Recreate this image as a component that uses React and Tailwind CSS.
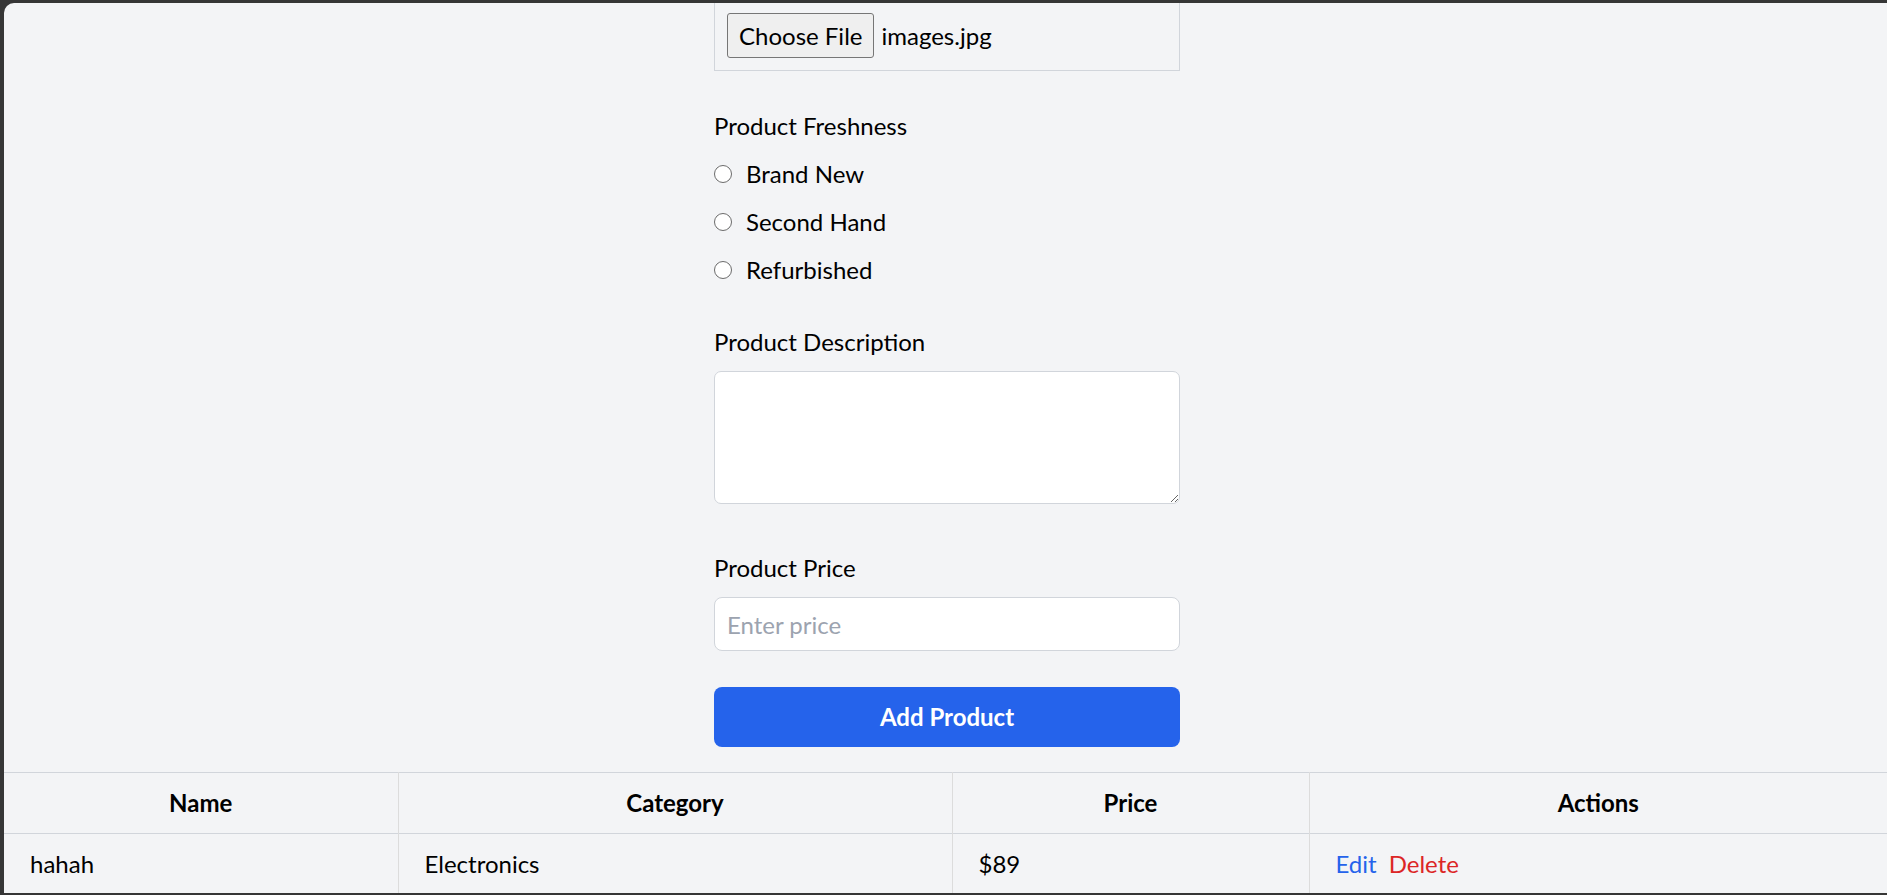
import React from 'react'

export default function App() {
    const products = [
        { name: 'hahah', category: 'Electronics', price: '$89' },
    ]

    const freshness = ['Brand New', 'Second Hand', 'Refurbished']

    return (
        <div className="h-[895px] overflow-hidden bg-[#363636] pt-[3px] pl-[4px] pb-[2px]">
            <div className="h-full overflow-hidden rounded-tl-[10px] bg-[#f3f4f6] text-[24px] leading-[36px] text-black font-['Lato','Noto_Sans',sans-serif]">
                {/* Form */}
                <div className="pl-[3px]">
                    <div className="mx-auto w-[466px]">
                        {/* File picker (scrolled partly out of view) */}
                        <div className="flex items-center border-x border-b border-[#d1d5db] px-3 pt-[10px] pb-3">
                            <span className="flex h-[45px] items-center rounded-[3px] border border-[#767676] bg-[#efefef] px-[11px]">
                                Choose File
                            </span>
                            <span className="ml-[7px]">images.jpg</span>
                        </div>

                        {/* Freshness */}
                        <div className="mt-[37px]">
                            <p className="mb-3">Product Freshness</p>
                            <div className="space-y-3">
                                {freshness.map((opt) => (
                                    <label key={opt} className="flex items-center">
                                        <span className="h-[18px] w-[18px] rounded-full border-[1.5px] border-[#6b6b6b] bg-white" />
                                        <span className="ml-[14px]">{opt}</span>
                                    </label>
                                ))}
                            </div>
                        </div>

                        {/* Description */}
                        <div className="mt-9">
                            <p className="mb-[11px]">Product Description</p>
                            <textarea className="block h-[133px] w-full rounded-[7px] border border-[#d1d5db] bg-white" />
                        </div>

                        {/* Price */}
                        <div className="mt-[46px]">
                            <p className="mb-[11px]">Product Price</p>
                            <input
                                type="text"
                                placeholder="Enter price"
                                className="block h-[54px] w-full rounded-[8px] border border-[#d1d5db] bg-white px-3 text-[24px] placeholder:text-[#9ca3af]"
                            />
                        </div>

                        <button className="mt-9 h-[60px] w-full rounded-[8px] bg-[#2563eb] font-bold text-white">
                            Add Product
                        </button>
                    </div>
                </div>

                {/* Product table */}
                <table className="mt-[25px] w-full table-fixed border-collapse">
                    <colgroup>
                        <col className="w-[394px]" />
                        <col className="w-[554px]" />
                        <col className="w-[357px]" />
                        <col />
                    </colgroup>
                    <thead>
                        <tr className="border-y border-[#d1d5db]">
                            <th className="px-[25px] py-3 text-center font-bold">Name</th>
                            <th className="border-l border-[#dcdcdc] px-[25px] py-3 text-center font-bold">Category</th>
                            <th className="border-l border-[#dcdcdc] px-[25px] py-3 text-center font-bold">Price</th>
                            <th className="border-l border-[#dcdcdc] px-[25px] py-3 text-center font-bold">Actions</th>
                        </tr>
                    </thead>
                    <tbody>
                        {products.map((p, idx) => (
                            <tr key={idx} className="border-b border-[#d1d5db]">
                                <td className="px-[26px] py-3">{p.name}</td>
                                <td className="border-l border-[#dcdcdc] px-[26px] py-3">{p.category}</td>
                                <td className="border-l border-[#dcdcdc] px-[26px] py-3">{p.price}</td>
                                <td className="border-l border-[#dcdcdc] px-[26px] py-3">
                                    <span className="text-[#2563eb]">Edit</span>
                                    <span className="ml-3 text-[#dc2626]">Delete</span>
                                </td>
                            </tr>
                        ))}
                    </tbody>
                </table>
            </div>
        </div>
    )
}
